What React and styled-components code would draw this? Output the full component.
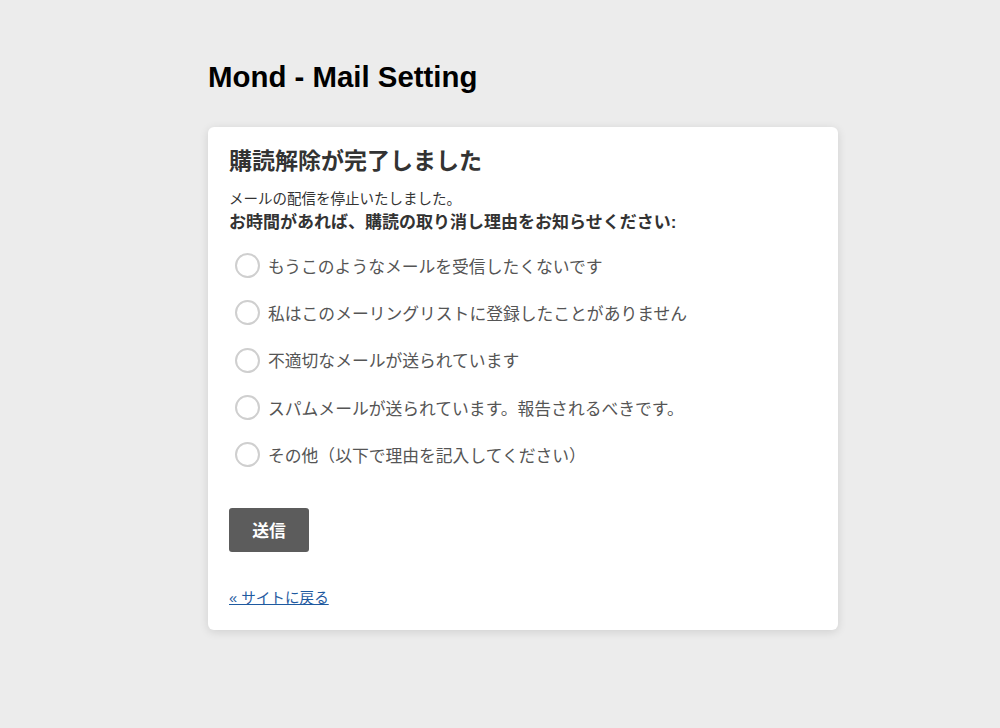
import React from 'react';
import styled, { createGlobalStyle } from 'styled-components';

const GlobalStyle = createGlobalStyle`
  body {
    margin: 0;
    background: #ececec;
    font-family: "Liberation Sans", Arial, "Noto Sans CJK JP", sans-serif;
    color: #333;
  }
`;

const Page = styled.main`
  width: 630px;
  padding: 56px 0 40px 208px;
`;

const Title = styled.h1`
  margin: 0 0 29px;
  font-size: 29.4px;
  font-weight: bold;
  color: #000;
  line-height: 42px;
`;

const Card = styled.section`
  background: #fff;
  border-radius: 6px;
  box-shadow: 0 2px 10px rgba(0, 0, 0, 0.12);
  padding: 19px 21px 23px;
`;

const Heading = styled.h2`
  margin: 0 0 14px;
  font-size: 23px;
  line-height: 30px;
  font-weight: bold;
  color: #333;
`;

const Note = styled.p`
  margin: 0;
  font-size: 14.5px;
  line-height: 18px;
  color: #333;
`;

const Question = styled.p`
  margin: 4px 0 9px;
  font-size: 17px;
  line-height: 21px;
  font-weight: bold;
  color: #333;
`;

const Form = styled.form`
  display: flex;
  flex-direction: column;
`;

const Options = styled.div`
  display: flex;
  flex-direction: column;
`;

const Option = styled.label`
  display: flex;
  align-items: center;
  gap: 8px;
  height: 47.3px;
  padding-left: 6px;
  font-size: 16.8px;
  color: #555;
  cursor: pointer;
`;

const Radio = styled.input.attrs({ type: 'radio' })`
  appearance: none;
  margin: 0;
  width: 25px;
  height: 25px;
  border: 2px solid #cfcfcf;
  border-radius: 50%;
  background: #fff;
  box-sizing: border-box;
`;

const Button = styled.button`
  align-self: flex-start;
  margin-top: 30px;
  width: 80px;
  height: 44px;
  border: none;
  border-radius: 3px;
  background: #5c5c5c;
  color: #fff;
  font-family: inherit;
  font-size: 16.8px;
  font-weight: bold;
`;

const BackLink = styled.a`
  display: inline-block;
  margin-top: 37px;
  font-size: 14.6px;
  line-height: 18px;
  color: #1f5aa0;
  text-decoration: underline;
`;

const reasons = [
  'もうこのようなメールを受信したくないです',
  '私はこのメーリングリストに登録したことがありません',
  '不適切なメールが送られています',
  'スパムメールが送られています。報告されるべきです。',
  'その他（以下で理由を記入してください）',
];

export default function App() {
  return (
    <>
      <GlobalStyle />
      <Page>
        <Title>Mond - Mail Setting</Title>
        <Card>
          <Heading>購読解除が完了しました</Heading>
          <Note>メールの配信を停止いたしました。</Note>
          <Question>お時間があれば、購読の取り消し理由をお知らせください:</Question>
          <Form onSubmit={(e) => e.preventDefault()}>
            <Options>
              {reasons.map((r) => (
                <Option key={r}>
                  <Radio name="reason" />
                  {r}
                </Option>
              ))}
            </Options>
            <Button type="submit">送信</Button>
          </Form>
          <BackLink href="#">« サイトに戻る</BackLink>
        </Card>
      </Page>
    </>
  );
}
